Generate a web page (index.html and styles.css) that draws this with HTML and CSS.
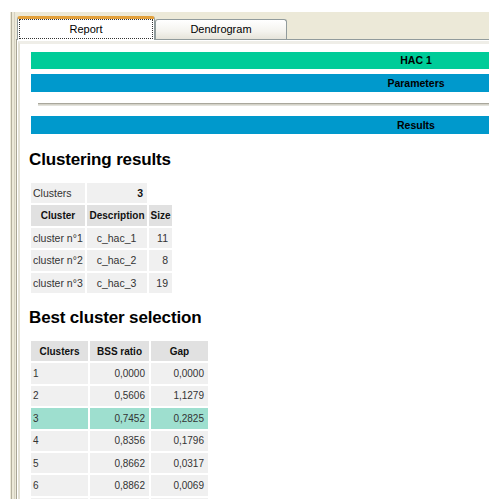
FILE: index.html
```html
<!DOCTYPE html>
<html lang="en">
<head>
<meta charset="utf-8">
<title>HAC 1</title>
<link rel="stylesheet" href="styles.css">
</head>
<body>
<div class="window">
  <div class="tabbar">
    <div class="tab tab-active"><span class="focus">Report</span></div>
    <div class="tab">Dendrogram</div>
  </div>
  <div class="panel">
    <div class="browser">
      <div class="content">
        <div class="bar bar-green">HAC 1</div>
        <div class="bar bar-blue">Parameters</div>
        <hr class="rule">
        <div class="bar bar-blue">Results</div>

        <h2 class="title">Clustering results</h2>
        <table class="grid grid-clusters">
          <colgroup><col class="c1"><col class="c2"><col class="c3"></colgroup>
          <tr><td>Clusters</td><td class="num strong">3</td></tr>
          <tr><th>Cluster</th><th>Description</th><th>Size</th></tr>
          <tr><td>cluster n°1</td><td class="mid">c_hac_1</td><td class="num">11</td></tr>
          <tr><td>cluster n°2</td><td class="mid">c_hac_2</td><td class="num">8</td></tr>
          <tr><td>cluster n°3</td><td class="mid">c_hac_3</td><td class="num">19</td></tr>
        </table>

        <h2 class="title title-next">Best cluster selection</h2>
        <table class="grid grid-select">
          <colgroup><col class="s1"><col class="s2"><col class="s3"></colgroup>
          <tr><th>Clusters</th><th>BSS ratio</th><th>Gap</th></tr>
          <tr><td>1</td><td class="num">0,0000</td><td class="num">0,0000</td></tr>
          <tr><td>2</td><td class="num">0,5606</td><td class="num">1,1279</td></tr>
          <tr class="picked"><td>3</td><td class="num">0,7452</td><td class="num">0,2825</td></tr>
          <tr><td>4</td><td class="num">0,8356</td><td class="num">0,1796</td></tr>
          <tr><td>5</td><td class="num">0,8662</td><td class="num">0,0317</td></tr>
          <tr><td>6</td><td class="num">0,8862</td><td class="num">0,0069</td></tr>
          <tr><td></td><td></td><td></td></tr>
        </table>
      </div>
    </div>
  </div>
</div>
</body>
</html>
```

FILE: styles.css
```css
html, body {
  margin: 0;
  padding: 0;
  background: #ffffff;
  height: 499px;
  overflow: hidden;
}

body {
  font-family: "Liberation Sans", Arial, sans-serif;
  color: #000;
}

/* XP-style window frame */
.window {
  margin: 12px 0 0 10px;
  height: 487px;
  display: flex;
  flex-direction: column;
  background:
    linear-gradient(to right,
      #ECE9D8 0 1px, #B4B09E 1px 2px, #ECE9D8 2px 4px,
      #D6D2C2 4px 5px, #ECE9D8 5px);
}

.tabbar {
  height: 27px;
  flex: none;
  display: flex;
  align-items: flex-end;
  padding-left: 7px;
}

.tab {
  box-sizing: border-box;
  width: 132px;
  height: 20px;
  border: 1px solid #919B9C;
  border-bottom: none;
  border-radius: 3px 3px 0 0;
  background: linear-gradient(#ffffff, #F4F3EE 60%, #E6E4DA);
  font-size: 11px;
  line-height: 19px;
  text-align: center;
  color: #000;
}

.tab-active {
  position: relative;
  z-index: 1;
  width: 138px;
  height: 24px;
  margin-bottom: -1px;
  padding: 0 1px 1px;
  border-top: 3px solid #FFC83C;
  box-shadow: inset 0 -1px 0 #fff;
  border-color: #E3A13C #919B9C #919B9C;
  background: #ffffff;
}

.focus {
  display: block;
  height: 18px;
  border: 1px dotted #333;
  line-height: 18px;
}

.panel {
  flex: 1;
  min-height: 0;
  margin-left: 6px;
  border-top: 1px solid #919B9C;
  border-left: 1px solid #A8A595;
  padding: 1px 0 0 1px;
  background: #ffffff;
  overflow: hidden;
}

.browser {
  height: 100%;
  border-top: 3px solid #EFEEE8;
  border-left: 2px solid #E4E2D6;
}

.content {
  padding: 8px 0 0 9px;
}

/* section bars */
.bar {
  width: 770px;
  height: 18px;
  margin-left: 2px;
  font-weight: bold;
  font-size: 10.5px;
  line-height: 18px;
  text-align: center;
  color: #000;
}

.bar-green {
  height: 17px;
  line-height: 17px;
  background: #00CC99;
  margin-bottom: 5px;
}

.bar-blue {
  background: #0099CC;
}

.rule {
  box-sizing: border-box;
  width: 760px;
  height: 3px;
  margin: 11px 0 10px 9px;
  border: none;
  border-top: 1px solid #A9A79C;
  border-bottom: 1px solid #E2E2DC;
  background: #D4D2C8;
}

.title {
  margin: 16px 0 11px;
  font-size: 17px;
  line-height: 20px;
  font-weight: bold;
  letter-spacing: -0.15px;
  color: #000;
}

.title-next {
  margin-top: 13px;
}

/* data tables */
.grid {
  border-collapse: separate;
  border-spacing: 2px;
  margin: 0;
  table-layout: fixed;
  color: #333;
}

.grid td,
.grid th {
  height: 20.4px;
  padding: 0 3px 0 2px;
  white-space: nowrap;
  vertical-align: middle;
  background: #F0F0F0;
  text-align: left;
}

.grid th {
  background: #E1E1E1;
  text-align: center;
  font-weight: bold;
  color: #111;
}

.grid .num { text-align: right; }
.grid .mid { text-align: center; }
.grid .strong { font-weight: bold; color: #111; }

.grid-clusters { font-size: 10.5px; width: 145px; }
.grid-clusters .c1 { width: 54px; }
.grid-clusters .c2 { width: 60px; }
.grid-clusters .c3 { width: 23px; }
.grid-clusters th { font-size: 10px; padding: 0 1px; }
.grid-clusters td.num { padding-right: 4px; }

.grid-select { font-size: 10px; width: 181px; }
.grid-select .s1 { width: 57px; }
.grid-select .s2 { width: 59px; }
.grid-select .s3 { width: 57px; }
.grid-select td { padding: 0 4px 0 2px; }
.grid-select th { padding: 0 2px; }

.grid-select .picked td {
  background: #9EDFCF;
}
```
